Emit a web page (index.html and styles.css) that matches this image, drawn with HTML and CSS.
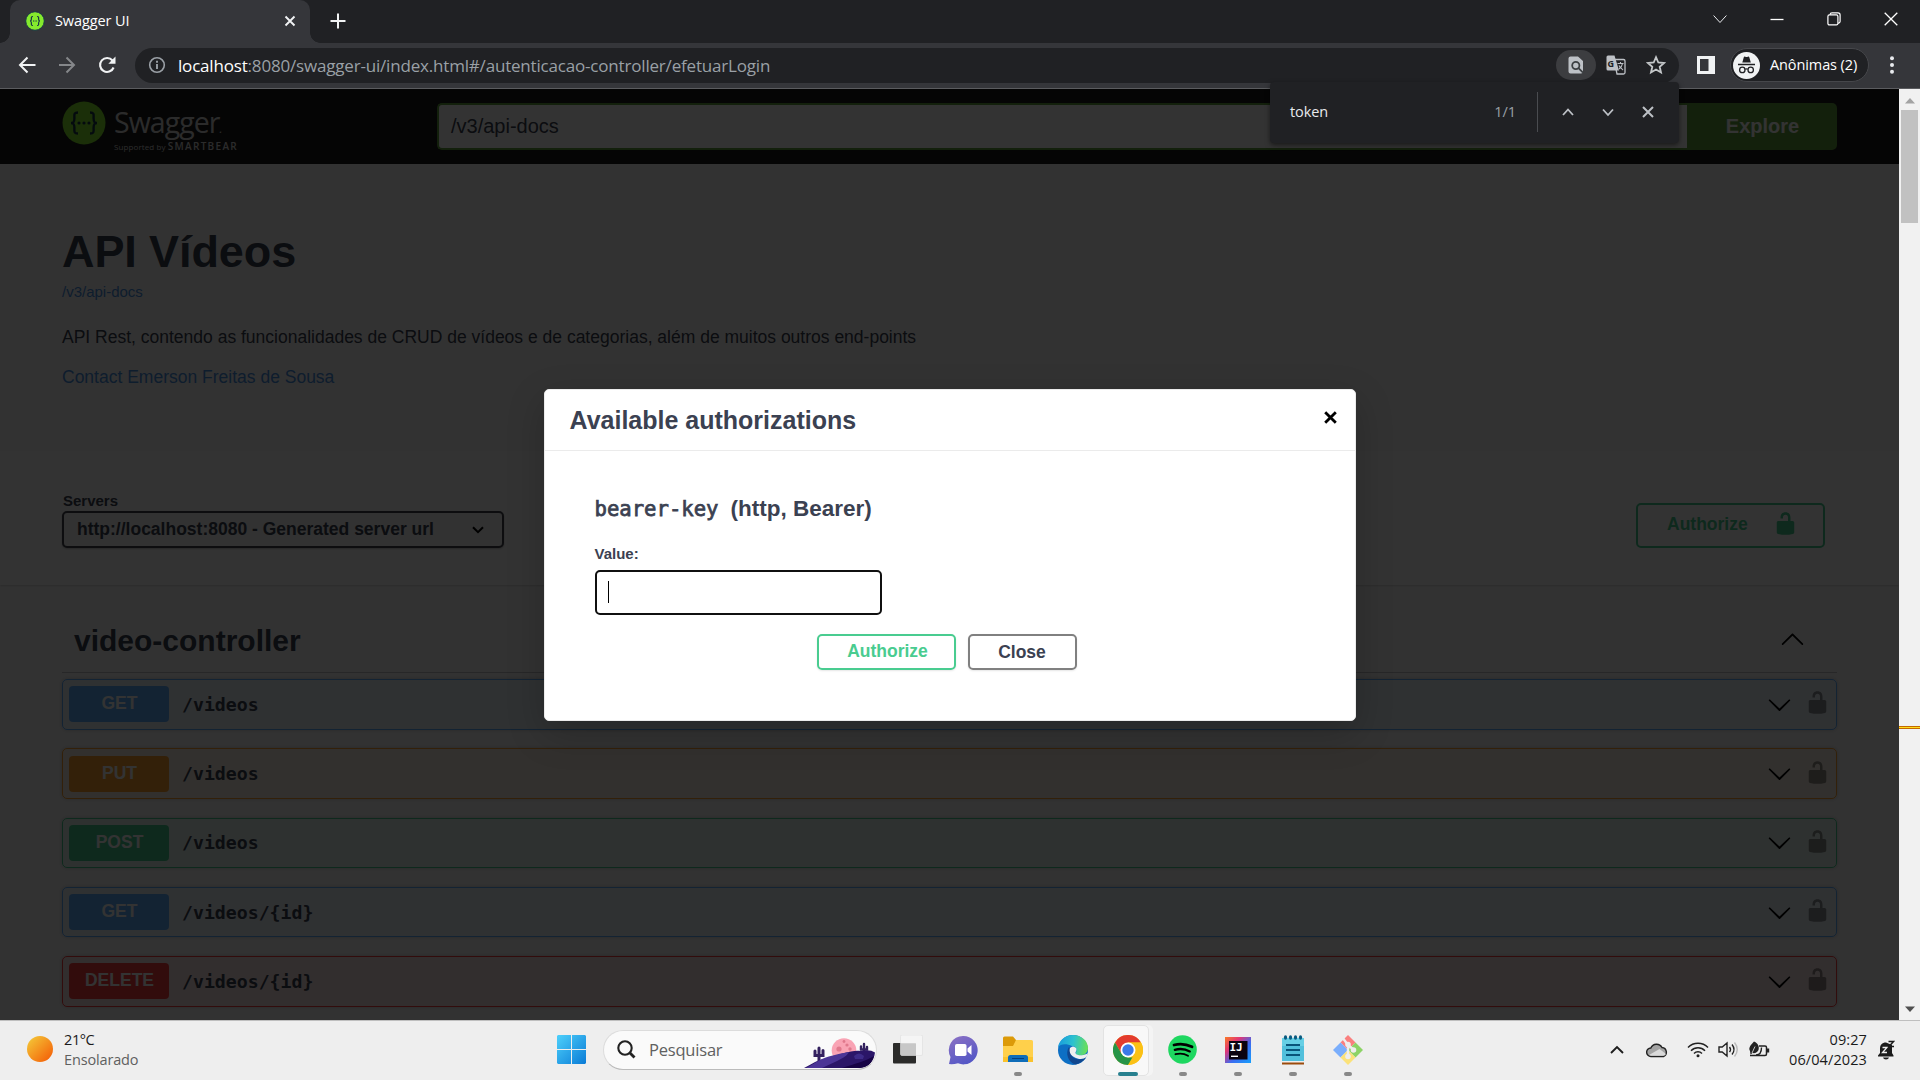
FILE: index.html
```html
<!DOCTYPE html>
<html lang="pt-BR">
<head>
<meta charset="utf-8">
<title>Swagger UI</title>
<link rel="stylesheet" href="styles.css">
</head>
<body>
<svg class="defs" width="0" height="0">
  <symbol id="lock" viewBox="0 0 20 20"><path d="M15.8 8H14V5.6C14 2.703 12.665 1 10 1 7.334 1 6 2.703 6 5.6V6h2v-.801C8 3.754 8.797 3 10 3c1.203 0 2 .754 2 2.199V8H4c-.553 0-1 .646-1 1.199V17c0 .549.428 1.139.951 1.307l1.197.387C5.672 18.861 6.55 19 7.1 19h5.8c.549 0 1.428-.139 1.951-.307l1.196-.387c.524-.167.953-.757.953-1.306V9.199C17 8.646 16.352 8 15.8 8z"/></symbol>
  <symbol id="down" viewBox="0 0 20 20"><path d="M17.418 6.109c.272-.268.709-.268.979 0s.271.701 0 .969l-7.908 7.83c-.27.268-.707.268-.979 0l-7.908-7.83c-.27-.268-.27-.701 0-.969.271-.268.709-.268.979 0L10 13.25l7.418-7.141z"/></symbol>
  <symbol id="up" viewBox="0 0 20 20"><path d="M17.418 14.908c.272.27.709.27.979 0s.271-.697 0-.969l-7.908-7.83c-.27-.268-.707-.268-.979 0l-7.908 7.83c-.27.27-.27.699 0 .969.271.27.709.27.979 0L10 7.767l7.418 7.141z"/></symbol>
</svg>

<header class="tabstrip">
  <div class="tab">
    <svg class="favicon" width="20" height="20" viewBox="0 0 20 20"><circle cx="10" cy="10" r="9.3" fill="#85ea2d" stroke="#173647" stroke-width="1"/><g fill="none" stroke="#173647" stroke-width="1.2"><path d="M8 5.5c-2 0-1.600 1-1.600 2.500S6 10 5 10c1 0 1.400.6 1.400 2s-.4 2.500 1.600 2.500M12 5.500c2 0 1.600 1 1.600 2.500S14 10 15 10c-1 0-1.400.6-1.400 2s.4 2.500-1.600 2.500"/><path d="M8 10h4" stroke-dasharray="1 .6"/></g></svg>
    <span class="tab-title">Swagger UI</span>
    <svg class="tab-close" width="12" height="12" viewBox="0 0 12 12" stroke="#f1f3f4" stroke-width="1.900"><path d="M1.500 1.500l9 9M10.500 1.500l-9 9"/></svg>
  </div>
  <svg class="new-tab" width="16" height="16" viewBox="0 0 16 16" stroke="#f1f3f4" stroke-width="2"><path d="M8 .5v15M.5 8h15"/></svg>
  <div class="window-buttons">
    <svg width="14" height="10" viewBox="0 0 14 10" fill="none" stroke="#e8eaed" stroke-width="1"><path d="M.6 1.500L7 8.500l6.400-7"/></svg>
    <svg width="14" height="14" viewBox="0 0 14 14" stroke="#fff" stroke-width="1.300"><path d="M.5 7.500h13"/></svg>
    <svg width="14" height="14" viewBox="0 0 14 14" fill="none" stroke="#fff" stroke-width="1.200"><rect x=".9" y="2.900" width="10" height="10" rx="1.500"/><path d="M3.200 2.700V2.200Q3.200.9 5 .9h6Q13.100.9 13.100 3v6.500q0 1.300-2 1.800"/></svg>
    <svg width="14" height="14" viewBox="0 0 14 14" stroke="#fff" stroke-width="1.300"><path d="M.7.7l12.600 12.600M13.300.7L.7 13.300"/></svg>
  </div>
</header>

<nav class="toolbar">
  <div class="nav-buttons">
    <svg width="18" height="18" viewBox="0 0 18 18" fill="none" stroke="#f1f3f4" stroke-width="2"><path d="M17.500 9H2.500M9.500 1.500L2 9l7.500 7.500"/></svg>
    <svg width="18" height="18" viewBox="0 0 18 18" fill="none" stroke="#85878a" stroke-width="2"><path d="M1 9h14.500M8.500 1.500L16 9l-7.500 7.500"/></svg>
    <svg width="18" height="18" viewBox="0 0 18 18" fill="none" stroke="#f1f3f4" stroke-width="2.100"><path d="M15.600 11.500A7 7 0 1 1 14.500 4.500"/><path d="M17.500.5v7.200h-7.200z" fill="#f1f3f4" stroke="none"/></svg>
  </div>
  <div class="omnibox">
    <svg width="18" height="18" viewBox="0 0 18 18" fill="none" stroke="#9aa0a6" stroke-width="1.600"><circle cx="9" cy="9" r="7.300"/><path d="M9 8v5M9 4.800v1.900" stroke-width="1.900"/></svg>
    <span class="url"><b>localhost</b>:8080/swagger-ui/index.html#/autenticacao-controller/efetuarLogin</span>
    <div class="omni-icons">
      <span class="find-chip"><svg width="16" height="20" viewBox="0 0 16 20"><path d="M2.500 1.500H10l5 4.500v10.500a2 2 0 0 1-2 2H2.500a2 2 0 0 1-2-2v-13a2 2 0 0 1 2-2z" fill="#bdc1c6"/><g fill="none" stroke="#3c4043" stroke-width="1.800"><circle cx="7.800" cy="10.500" r="3.600"/><path d="M10.500 13.200l4.500 4.500"/></g></svg></span>
      <svg width="20" height="20" viewBox="0 0 20 20"><path d="M8 4.500h9.500a1.500 1.500 0 0 1 1.500 1.500v11.500a1.500 1.500 0 0 1-1.500 1.500H11z" fill="none" stroke="#bdc1c6" stroke-width="1.300"/><path d="M2 .5h6.500L13 15.500H2A1.500 1.500 0 0 1 .5 14V2A1.500 1.500 0 0 1 2 .5z" fill="#bdc1c6"/><text x="1.500" y="11.500" class="g-letter">G</text><path d="M11.500 8.500h6M14.500 7v1.500M16.500 8.500c-.5 3-2 4.500-3.500 5.500M13 10.500c1 2 2.500 3 4 4.500" fill="none" stroke="#bdc1c6" stroke-width="1.100"/></svg>
      <svg width="20" height="20" viewBox="0 0 20 20" fill="none" stroke="#c4c7c9" stroke-width="1.800"><path d="M10 2.200l2.300 5.300 5.800.5-4.400 3.800 1.300 5.700-5-3-5 3 1.300-5.700L1.900 8l5.800-.5z"/></svg>
    </div>
  </div>
  <svg class="side-panel" width="18" height="18" viewBox="0 0 18 18"><path d="M0 0h18v18H0zM3 3v12h8.500V3z" fill="#f1f3f4" fill-rule="evenodd"/></svg>
  <div class="profile">
    <svg width="27" height="27" viewBox="0 0 27 27"><circle cx="13.500" cy="13.500" r="13.500" fill="#f1f3f4"/><path d="M9.300 10.500l1.500-5.200c.3-.8.9-.9 1.500-.6 1 .4 1.600.4 2.500 0 .6-.3 1.200-.2 1.500.6l1.500 5.200z" fill="#202124"/><path d="M5 12.500h17" stroke="#202124" stroke-width="1.500"/><g fill="none" stroke="#202124" stroke-width="1.300"><circle cx="9.300" cy="17.900" r="2.700"/><circle cx="17.700" cy="17.900" r="2.700"/><path d="M12.200 17.300q1.300-.8 2.600 0"/></g></svg>
    <span>Anônimas (2)</span>
  </div>
  <svg class="menu-dots" width="4" height="18" viewBox="0 0 4 18" fill="#e8eaed"><circle cx="2" cy="2.300" r="2"/><circle cx="2" cy="9" r="2"/><circle cx="2" cy="15.700" r="2"/></svg>
</nav>

<div class="find-bar">
  <span class="find-text">token</span>
  <span class="find-count">1/1</span>
  <span class="find-sep"></span>
  <svg width="12" height="12" viewBox="0 0 12 12" fill="none" stroke="#bdc1c6" stroke-width="1.800"><path d="M1 9l5-5.500L11 9"/></svg>
  <svg width="12" height="12" viewBox="0 0 12 12" fill="none" stroke="#bdc1c6" stroke-width="1.800"><path d="M1 3.500L6 9l5-5.500"/></svg>
  <svg width="12" height="12" viewBox="0 0 12 12" fill="none" stroke="#bdc1c6" stroke-width="2"><path d="M1 1l10 10M11 1L1 11"/></svg>
</div>

<div class="viewport">
  <main class="page">
    <div class="topbar">
      <div class="logo">
        <svg width="44" height="44" viewBox="0 0 44 44"><circle cx="22" cy="22" r="21.500" fill="#85ea2d"/><g fill="none" stroke="#173647" stroke-width="2.400"><path d="M16 11.500c-4.500 0-3.600 2.200-3.600 5.500S12 22 9 22c3 0 3.400 1.700 3.400 5s-.9 5.500 3.600 5.500M28 11.500c4.500 0 3.600 2.200 3.600 5.500S32 22 35 22c-3 0-3.400 1.700-3.400 5s.9 5.500-3.600 5.500"/></g><g fill="#173647"><circle cx="17" cy="22" r="1.600"/><circle cx="22" cy="22" r="1.600"/><circle cx="27" cy="22" r="1.600"/></g></svg>
        <div class="logo-words">
          <span class="logo-name">Swagger<i>.</i></span>
          <span class="logo-sub">Supported by <b>SMARTBEAR</b></span>
        </div>
      </div>
      <div class="spec-form"><div class="spec-input">/v3/api-docs</div><div class="explore">Explore</div></div>
    </div>

    <section class="info">
      <h1>API Vídeos</h1>
      <a class="spec-link">/v3/api-docs</a>
      <p>API Rest, contendo as funcionalidades de CRUD de vídeos e de categorias, além de muitos outros end-points</p>
      <a class="contact">Contact Emerson Freitas de Sousa</a>
    </section>

    <section class="scheme">
      <div>
        <div class="servers-label">Servers</div>
        <div class="server-select"><span>http://localhost:8080 - Generated server url</span>
          <svg width="12" height="8" viewBox="0 0 12 8" fill="none" stroke="#000" stroke-width="2"><path d="M1 1.200l5 5 5-5"/></svg></div>
      </div>
      <div class="authorize"><span>Authorize</span><svg width="25" height="25"><use href="#lock"/></svg></div>
    </section>

    <section class="operations">
      <div class="tag"><h2>video-controller</h2><svg width="25" height="25"><use href="#up"/></svg></div>
      <div class="op get"><span class="method">GET</span><span class="path">/videos</span><svg width="25" height="25"><use href="#down"/></svg><svg class="op-lock" width="25" height="25"><use href="#lock"/></svg></div>
      <div class="op put"><span class="method">PUT</span><span class="path">/videos</span><svg width="25" height="25"><use href="#down"/></svg><svg class="op-lock" width="25" height="25"><use href="#lock"/></svg></div>
      <div class="op post"><span class="method">POST</span><span class="path">/videos</span><svg width="25" height="25"><use href="#down"/></svg><svg class="op-lock" width="25" height="25"><use href="#lock"/></svg></div>
      <div class="op get"><span class="method">GET</span><span class="path">/videos/{id}</span><svg width="25" height="25"><use href="#down"/></svg><svg class="op-lock" width="25" height="25"><use href="#lock"/></svg></div>
      <div class="op delete"><span class="method">DELETE</span><span class="path">/videos/{id}</span><svg width="25" height="25"><use href="#down"/></svg><svg class="op-lock" width="25" height="25"><use href="#lock"/></svg></div>
    </section>

    <div class="backdrop">
      <div class="modal">
        <div class="modal-header"><h3>Available authorizations</h3>
          <svg width="13" height="13" viewBox="0 0 13 13" stroke="#000" stroke-width="2.800"><path d="M1.200 1.200l10.600 10.600M11.800 1.200L1.200 11.800"/></svg></div>
        <div class="modal-body">
          <h4><code>bearer-key</code><span>(http, Bearer)</span></h4>
          <label>Value:</label>
          <div class="token-input"><span class="caret"></span></div>
          <div class="modal-buttons"><span class="btn ok">Authorize</span><span class="btn">Close</span></div>
        </div>
      </div>
    </div>
  </main>
  <aside class="scrollbar">
    <svg width="12" height="7" viewBox="0 0 12 7" fill="#a3a3a3"><path d="M1 6.500L6 1l5 5.500z"/></svg>
    <div class="track"><div class="thumb"></div><div class="match"></div></div>
    <svg width="12" height="7" viewBox="0 0 12 7" fill="#505050"><path d="M1 .5L6 6l5-5.500z"/></svg>
  </aside>
</div>

<footer class="taskbar">
  <div class="weather">
    <span class="sun"></span>
    <div><div class="temp">21°C</div><div class="cond">Ensolarado</div></div>
  </div>
  <div class="apps">
    <svg class="start" width="29" height="29" viewBox="0 0 29 29"><defs><linearGradient id="win" x1="0" y1="0" x2="1" y2="1" gradientUnits="objectBoundingBox"><stop offset="0" stop-color="#4dd0fb"/><stop offset="1" stop-color="#0a7bd6"/></linearGradient></defs><path fill="url(#win)" d="M1 0h13v14H0V1zM15 0h13l1 1v13H15zM0 15h14v14H1l-1-1zM15 15h14v13l-1 1H15z"/></svg>
    <div class="search">
      <svg width="19" height="19" viewBox="0 0 19 19" fill="none" stroke="#222" stroke-width="2.100"><circle cx="8" cy="8" r="6.700"/><path d="M12.500 12.500l5 5" stroke-width="2.800"/></svg>
      <span>Pesquisar</span>
      <svg class="scene" width="72" height="32" viewBox="0 0 72 32"><circle cx="40" cy="13.500" r="12.300" fill="#f9a3b4"/><g fill="#e0788c"><circle cx="35" cy="12" r="2.600"/><circle cx="43" cy="8" r="1.600"/><circle cx="40" cy="4.500" r="1.400"/><circle cx="46" cy="12" r="1.700"/></g><g fill="none" stroke="#33215f" stroke-width="3" stroke-linecap="round"><path d="M15 24V11M11 14v4.500h8v-5"/><path d="M60 16V7M57 9.500v3h6V10" stroke-width="2.400"/></g><path d="M0 31C8 27 14 22 23 22 36 17 48 13 56 14q10-2 15 1.500C70 24 65 29 56 31z" fill="#2b1668"/><path d="M14 24c9-5 20-7 31-9-2 5-12 9-27 16H2c5-2 8-5 12-7z" fill="#4b3596"/><path d="M50 19q5-5 10 0l-1 3h-8z" fill="#3d2b88"/><path d="M38 31c12-4 24-7 32-12-2 8-7 12-15 12z" fill="#170345"/></svg>
    </div>
    <svg class="icon taskview" width="30" height="30" viewBox="0 0 30 30"><rect x="0" y="8" width="23" height="20.500" rx="1" fill="#2b2b2a"/><rect x="7.500" y="0" width="22" height="20.500" rx="1.500" fill="#f6f6f6" fill-opacity=".88" stroke="#ddd" stroke-width=".6"/><path d="M8 8.500h15V20H8z" fill="#bbb" fill-opacity=".65"/></svg>
    <svg class="icon" width="30" height="30" viewBox="0 0 30 30"><defs><linearGradient id="chat" x1="0" y1="0" x2=".5" y2="1"><stop offset="0" stop-color="#8d72c4"/><stop offset="1" stop-color="#5658c6"/></linearGradient></defs><path d="M15 1a14.200 14.200 0 1 1-5 27.300Q5 29.500 1 29L2.500 22A14.200 14.200 0 0 1 15 1z" fill="url(#chat)"/><rect x="7" y="9" width="11.500" height="12" rx="1.800" fill="#fff"/><path d="M19.500 13.500l4-3.500v10l-4-3.500z" fill="#fff"/></svg>
    <span class="app run"><svg width="30" height="28" viewBox="0 0 30 28"><path d="M0 2Q0 .5 1.500.5H10l3 3.500h7v6H0z" fill="#dc9a08"/><path d="M0 10h10l3-6h15.500Q30 4 30 5.500V26H0z" fill="#ffd04b"/><path d="M0 21h30v5H0z" fill="#fac22c"/><path d="M5 21.500q0-2.500 2.500-2.500h15q2.500 0 2.500 2.500V26H5z" fill="#0f6db9"/><path d="M9 22.500h12" stroke="#063f7e"/></svg></span>
    <svg class="icon" width="30" height="30" viewBox="0 0 30 30"><defs><linearGradient id="edge" x1="0" y1=".4" x2="1" y2=".5"><stop offset="0" stop-color="#199cdd"/><stop offset=".5" stop-color="#2dc2cf"/><stop offset="1" stop-color="#6be054"/></linearGradient></defs><circle cx="15" cy="15" r="15" fill="#0d6fc4"/><path d="M0 12.500C1 5 7.500 0 15 0c8 0 15 5.500 15 13 0 5-4 7.500-8 7.500-3 0-5-1-4-3 1.500-3-.5-6.500-4-6.500C8 8 2 9 0 12.500z" fill="url(#edge)"/><path d="M11 12c-4 6-1 15 6 17.500 4-.5 8.500-3 11-7-7 4-16 1-15-6z" fill="#11478f"/><path d="M12 13q3-3 6 0c1 2 0 3-.5 4.500-.5 2.500 5 4 11 1.500l1.500-1-1.500 4q-4 3-9 1.500c-6-1.500-9-6-7.500-10.500z" fill="#efeff0"/></svg>
    <span class="app run active"><svg width="30" height="30" viewBox="0 0 30 30"><circle cx="15" cy="15" r="15" fill="#fbc116"/><path d="M2 7.500A15 15 0 0 1 28 7.500H15L8.500 18.750z" fill="#e33b2e"/><path d="M2 7.500L8.500 18.750 15 22.500h6.500L15 30A15 15 0 0 1 2 7.500z" fill="#269447"/><path d="M21.500 18.750L15 30a15 15 0 0 0 13-22.500H15z" fill="#fbc116"/><circle cx="15" cy="15" r="7.500" fill="#fff"/><circle cx="15" cy="15" r="5.700" fill="#3c79e8"/></svg></span>
    <span class="app run"><svg width="29" height="29" viewBox="0 0 29 29"><circle cx="14.500" cy="14.500" r="14.300" fill="#1ed760"/><g fill="none" stroke="#000" stroke-linecap="round"><path d="M6 10q9-2.500 18 1.800" stroke-width="2.800"/><path d="M6.800 14.800q8-2.200 15 1.600" stroke-width="2.300"/><path d="M7.500 19.200q7-1.700 12.500 1.500" stroke-width="1.900"/></g></svg></span>
    <span class="app run"><svg width="26" height="26" viewBox="0 0 26 26"><defs><linearGradient id="ij" x1="0" y1="0" x2="1" y2="1"><stop offset="0" stop-color="#fb7b25"/><stop offset=".3" stop-color="#e03576"/><stop offset=".6" stop-color="#3c6cf0"/><stop offset="1" stop-color="#159ffc"/></linearGradient></defs><path d="M0 0h26v26H0z" fill="url(#ij)"/><path d="M4 4h18.500v18.500H4z" fill="#0b0310"/><text x="4.500" y="13.500" class="ij-text">IJ</text><path d="M6 19.300h7" stroke="#fff" stroke-width="1.400"/></svg></span>
    <span class="app run"><svg width="24" height="30" viewBox="0 0 24 30"><path d="M1 3h22v24H1z" fill="#52c0dc"/><path d="M1 3h22v8H1z" fill="#67cfe5"/><path d="M1 27h22v2.500H1z" fill="#9b4b0c"/><path d="M1 26h22v1.500H1z" fill="#eee"/><g stroke="#09547a" stroke-width="2"><path d="M5 10h14M5 15h14M5 20h14"/></g><g fill="#0a5b80"><ellipse cx="4.500" cy="2.500" rx="1.600" ry="2.200"/><ellipse cx="9.500" cy="2.500" rx="1.600" ry="2.200"/><ellipse cx="14.500" cy="2.500" rx="1.600" ry="2.200"/><ellipse cx="19.500" cy="2.500" rx="1.600" ry="2.200"/></g></svg></span>
    <span class="app run"><svg width="30" height="30" viewBox="0 0 30 30"><path d="M15 0l7.500 7.500L15 15 7.500 7.500z" fill="#fa7f7e"/><path d="M22.500 7.500L30 15l-7.500 7.500L15 15z" fill="#8cd366"/><path d="M7.500 7.500L15 15l-7.500 7.500L0 15z" fill="#7aaefc"/><path d="M15 15l7.500 7.500L15 30l-7.500-7.500z" fill="#fbe27a"/><g stroke="#eee" stroke-width="2.400" fill="#eee"><path d="M9 2l6 8v13M15 10l6 5" fill="none"/><circle cx="15" cy="9.500" r="1.600"/><circle cx="20.500" cy="15" r="1.600"/><circle cx="15" cy="21.500" r="1.600"/></g></svg></span>
  </div>
  <div class="tray">
    <svg width="14" height="9" viewBox="0 0 14 9" fill="none" stroke="#1d1d1d" stroke-width="1.900"><path d="M1 8l6-6 6 6"/></svg>
    <svg class="t-cloud" width="22" height="16" viewBox="0 0 22 16"><path d="M5 14.500A4.200 4.200 0 0 1 4.800 6 6.200 6.200 0 0 1 16 5.500a4.700 4.700 0 0 1 1.500 9z" fill="#a4a4a4" stroke="#222" stroke-width="1.400"/><path d="M3 13l10.500-6 6.500 5q-1 2-3 1.800H5z" fill="#dadada"/></svg>
    <svg class="t-wifi" width="22" height="17" viewBox="0 0 22 17" fill="none" stroke="#222" stroke-width="1.500"><path d="M1 6.500a14 14 0 0 1 20 0M4 9.700a9.900 9.900 0 0 1 14 0M7 12.500a5.700 5.700 0 0 1 8 0"/><circle cx="11" cy="14.700" r="1.500" fill="#222" stroke="none"/></svg>
    <svg class="t-vol" width="21" height="17" viewBox="0 0 21 17" fill="none" stroke="#222" stroke-width="1.400"><path d="M1 6h3.200L9 2v13l-4.800-4H1zM11.500 6q2 2.500 0 5M14 3.500q4 5 0 10"/><path d="M16.500 1.500q5.500 7 0 14" stroke="#bbb"/></svg>
    <svg class="t-bat" width="22" height="18" viewBox="0 0 22 18"><path d="M11 5h6q1.500 0 1.500 1.500V13q0 1.500-1.500 1.500H2" fill="none" stroke="#222" stroke-width="1.500"/><path d="M19 7.500h2.200v4H19z" fill="#222"/><path d="M6 .5c4.500 2 5.500 5.500 4.500 8.500-1 2.500-3.500 3.500-6 3L2.500 13.500 2 10C0 6.500 3 4 6 .5z" fill="#222"/><path d="M7 5.500L4 12" stroke="#eee" stroke-width=".8"/><path d="M8 14c3.500 0 5.500-3 5.500-7.500" fill="none" stroke="#222" stroke-width="1.400"/></svg>
    <div class="clock"><div>09:27</div><div>06/04/2023</div></div>
    <svg class="t-bell" width="18" height="20" viewBox="0 0 18 20"><path d="M9 2.500c-4 0-6 2.500-6 6V13l-2 2.500v1h15.500v-1L15 13V5z" fill="#1b1b1b"/><path d="M6 17.500h6q-.5 2-3 2t-3-2z" fill="#1b1b1b"/><g fill="none" stroke="#eee" stroke-width="1.300"><path d="M5.500 7.500h4.500l-4.500 5H10"/></g><path d="M11.500 1.500h5L12 6.500h5" fill="none" stroke="#1b1b1b" stroke-width="1.500"/></svg>
  </div>
</footer>
</body>
</html>
```
FILE: styles.css
```css
* { box-sizing: border-box; }
body { margin: 0; width: 1920px; height: 1080px; overflow: hidden; position: relative; display: flex; flex-direction: column; font-family: "Open Sans", "Noto Sans", sans-serif; }
svg { display: block; flex: none; }
.defs { position: absolute; }
h1, h2, h3, h4, p { margin: 0; }

/* Browser chrome */
.tabstrip { height: 43px; background: #202124; display: flex; padding-left: 10px; }
.tab { position: relative; width: 300px; height: 43px; background: #35363a; border-radius: 10px 10px 0 0; display: flex; align-items: center; padding: 0 14px 2px 15px; }
.tab::before, .tab::after { content: ""; position: absolute; bottom: 0; width: 10px; height: 10px; }
.tab::before { left: -10px; background: radial-gradient(circle at 0 0, transparent 9.5px, #35363a 10px); }
.tab::after { right: -10px; background: radial-gradient(circle at 100% 0, transparent 9.5px, #35363a 10px); }
.tab-title { color: #fff; font-size: 14.5px; margin-left: 10px; letter-spacing: -.1px; flex: 1; line-height: 20px; }
.new-tab { margin: 13px 0 0 20px; }
.window-buttons { margin-left: auto; display: flex; gap: 43px; height: 38px; align-items: center; padding-right: 22px; }
.toolbar { height: 46px; background: #35363a; border-bottom: 1px solid #5b5c5f; display: flex; align-items: center; padding-bottom: 1px; }
.nav-buttons { display: flex; gap: 22px; padding-left: 18px; width: 135px; }
.omnibox { width: 1544px; height: 35px; border-radius: 18px; background: #202124; display: flex; align-items: center; padding: 0 13px; }
.url { margin-left: 12px; font-size: 17px; color: #9aa0a6; letter-spacing: -.185px; }
.url b { font-weight: 400; color: #fff; }
.omni-icons { margin-left: auto; display: flex; align-items: center; gap: 20px; }
.find-chip { width: 40px; height: 30px; border-radius: 15px; background: #3c3d40; display: flex; align-items: center; justify-content: center; margin-right: -10px; }
.g-letter { font: bold 9px "Open Sans", sans-serif; fill: #202124; }
.side-panel { margin-left: 18px; }
.profile { margin-left: 15px; width: 139px; height: 34px; border: 1px solid #46474b; border-radius: 17px; background: #202124; display: flex; align-items: center; padding-left: 2px; color: #fff; font-size: 14.5px; }
.profile span { margin: -2px 0 0 10px; letter-spacing: -.1px; white-space: nowrap; }
.menu-dots { margin-left: 21px; }
.find-bar { position: absolute; z-index: 5; left: 1270px; top: 82px; width: 409px; height: 61px; background: #202124; border-radius: 4px; box-shadow: 0 2px 5px rgba(0,0,0,.5); display: flex; align-items: center; padding: 0 25px 2px 20px; font-size: 14.5px; }
.find-text { color: #e8eaed; width: 205px; letter-spacing: -.1px; }
.find-count { color: #9aa0a6; width: 43px; }
.find-sep { width: 1px; height: 40px; background: #4a4c50; }
.find-bar svg { margin-left: 28px; }
.find-sep + svg { margin-left: 24px; }

/* Document */
.viewport { height: 931px; display: flex; }
.page { width: 1899px; position: relative; background: #fafafa; font-family: "Liberation Sans", Arial, sans-serif; color: #3b4151; overflow: hidden; }
.topbar { height: 75px; background: #1b1b1b; display: flex; padding: 0 62px; }
.logo { display: flex; width: 375px; color: #fff; padding-top: 12px; }
.logo-words { margin-left: 8px; font-family: "Open Sans", sans-serif; color: #d8d8d8; }
.logo-name { display: block; font-size: 28.5px; line-height: 38px; letter-spacing: -.95px; margin-top: 2px; }
.logo-name i { font-size: 12px; }
.logo-sub { display: block; font-size: 8px; line-height: 10px; white-space: nowrap; margin-top: -7px; letter-spacing: .1px; }
.logo-sub b { font-size: 10px; letter-spacing: 1.3px; font-weight: 600; }
.spec-form { flex: 1; display: flex; height: 47px; margin-top: 14px; }
.spec-input { flex: 1; border: 2px solid #62a03f; border-right: 0; border-radius: 5px 0 0 5px; background: #fff; font-size: 20px; line-height: 43px; padding-left: 12px; }
.explore { width: 150px; background: #62a03f; border-radius: 0 5px 5px 0; color: #fff; font-weight: 700; font-size: 20px; line-height: 47px; text-align: center; padding-left: 1px; }
.info { height: 287px; padding: 62px 62px 0; font-size: 17.5px; }
.info h1 { font-size: 45px; line-height: 52px; letter-spacing: -.1px; }
.info a { display: block; color: #4990e2; line-height: 20px; }
.info .spec-link { font-size: 15px; margin-top: 4px; }
.info p { line-height: 20px; margin-top: 25px; }
.info .contact { margin-top: 20px; }
.scheme { height: 134px; background: #fff; box-shadow: 0 1px 2px rgba(0,0,0,.15); padding: 41px 74px 0 62px; display: flex; justify-content: space-between; font-weight: 700; }
.servers-label { font-size: 15px; line-height: 17px; padding: 0 1px; }
.server-select { width: 442px; height: 37px; margin-top: 2px; border: 2.5px solid #41444e; border-radius: 5px; background: #f7f7f7; box-shadow: 0 1px 2px rgba(0,0,0,.25); font-size: 17.5px; display: flex; align-items: center; justify-content: space-between; padding: 0 18px 0 13px; }
.authorize { width: 189px; height: 45px; margin-top: 11px; border: 2.5px solid #49cc90; border-radius: 5px; color: #49cc90; fill: #49cc90; font-size: 17.5px; display: flex; justify-content: space-between; padding: 7px 25px 0 29px; line-height: 24px; }
.authorize svg { margin-top: -1px; }
.operations { padding: 0 62px; }
.tag { height: 88px; border-bottom: 1px solid rgba(59,65,81,.3); margin-bottom: 6px; display: flex; justify-content: space-between; padding: 39px 32px 0 12px; }
.tag h2 { font-size: 30px; line-height: 34px; }
.tag svg { margin-top: 2px; fill: #000; }
.op { height: 50.5px; margin-bottom: 18.75px; border: 1.25px solid; border-radius: 5px; box-shadow: 0 0 4px rgba(0,0,0,.19); display: flex; align-items: center; padding: 0 6px; }
.method { width: 100px; height: 36px; border-radius: 4px; color: #fff; font-weight: 700; font-size: 17.5px; line-height: 35px; text-align: center; padding-left: 1px; }
.path { flex: 1; margin-left: 13px; font: 700 18.2px "DejaVu Sans Mono", monospace; }
.op svg { fill: #000; }
.op .op-lock { margin: -3px 0 0 13px; fill: #000; opacity: .4; }
.get { border-color: #61affe; background: rgba(97,175,254,.1); }
.get .method { background: #61affe; }
.put { border-color: #fca130; background: rgba(252,161,48,.1); }
.put .method { background: #fca130; }
.post { border-color: #49cc90; background: rgba(73,204,144,.1); }
.post .method { background: #49cc90; }
.delete { border-color: #f93e3e; background: rgba(249,62,62,.1); }
.delete .method { background: #f93e3e; }

/* Authorization dialog */
.backdrop { position: absolute; inset: 0; background: rgba(0,0,0,.8); display: flex; justify-content: center; align-items: center; }
.modal { width: 812px; height: 332px; background: #fff; border: 1px solid #ebebeb; border-radius: 5px; box-shadow: 0 12px 38px rgba(0,0,0,.2); }
.modal-header { height: 61px; border-bottom: 1px solid #ebebeb; display: flex; justify-content: space-between; align-items: center; padding: 0 18px 0 25px; }
.modal-header h3 { font-size: 25px; font-weight: 700; line-height: 30px; }
.modal-header svg { margin-top: -5px; }
.modal-body { padding: 43px 50px 0; }
h4 { display: flex; align-items: baseline; font-size: 22.5px; line-height: 30px; }
h4 code { font: 400 20.6px "DejaVu Sans Mono", monospace; -webkit-text-stroke: .75px #3b4151; margin-right: 12px; }
label { display: block; font-size: 15px; font-weight: 700; line-height: 18px; margin-top: 21px; }
.token-input { width: 287px; height: 45px; border: 2px solid #101010; border-radius: 5px; margin-top: 7px; padding: 9px 11px; }
.caret { display: block; width: 1px; height: 22px; background: #000; }
.modal-buttons { display: flex; justify-content: center; gap: 12px; margin: 19px 6px 0 0; }
.btn { height: 36px; border: 2px solid gray; border-radius: 5px; box-shadow: 0 1px 2px rgba(0,0,0,.1); width: 109px; text-align: center; font-weight: 700; font-size: 17.5px; line-height: 32px; }
.btn.ok { width: 139px; border-color: #49cc90; color: #49cc90; line-height: 30px; padding-left: 3px; }

.scrollbar { width: 21px; background: #f1f1f1; display: flex; flex-direction: column; align-items: center; padding: 8px 0 7px; }
.track { width: 21px; flex: 1; margin: 6px 0; position: relative; }
.thumb { width: 17px; height: 113px; margin-left: 2px; background: #c1c1c1; }
.match { position: absolute; top: 616px; left: 0; width: 21px; height: 3px; background: #ffde1c; border: solid #c46800; border-width: 1px 0; }

/* Taskbar */
.taskbar { height: 60px; background: #eee; border-top: 1px solid #bfbfbf; display: flex; color: #1b1b1b; }
.weather { display: flex; width: 557px; padding: 9px 0 0 27px; font-size: 14.5px; }
.sun { width: 26px; height: 26px; border-radius: 50%; margin: 6px 11px 0 0; background: linear-gradient(135deg, #f4c235 10%, #f4690c 85%); }
.temp, .cond { line-height: 20px; letter-spacing: -.4px; }
.cond { color: #5f5f5f; letter-spacing: -.15px; }
.apps { display: flex; padding-bottom: 2px; align-items: center; }
.start { margin-right: 17px; }
.search { width: 274px; height: 40px; border-radius: 20px; background: #fafafa; border: 1px solid #dcdcdc; border-bottom-color: #bbb; display: flex; align-items: center; padding-left: 13px; overflow: hidden; margin-right: 3px; }
.search span { margin-left: 13px; color: #606060; font-size: 16.5px; letter-spacing: -.2px; }
.scene { margin: 7px 0 0 auto; }
.icon { margin: 0 12.5px; }
.app { width: 55px; height: 50px; display: flex; align-items: center; justify-content: center; position: relative; }
.run::after { content: ""; position: absolute; left: 23.5px; bottom: -1px; width: 8px; height: 4px; border-radius: 2px; background: #888; }
.active::before { content: ""; position: absolute; z-index: 0; left: 3px; top: 0; width: 44px; height: 49px; background: #f8f8f8; border: 1px solid #e3e3e3; border-radius: 5px; box-shadow: 4px 0 0 #f4f4f4; }
.active svg { position: relative; }
.active::after { left: 17.5px; width: 20px; background: #28808f; }
.tray { margin-left: auto; display: flex; align-items: center; padding: 0 25px 2px 0; }
.t-cloud { margin-left: 22px; }
.t-wifi { margin-left: 19px; }
.t-vol { margin-left: 9px; }
.t-bat { margin-left: 9px; }
.clock { width: 97px; text-align: right; font-size: 14.5px; line-height: 20px; letter-spacing: .1px; }
.t-bell { margin-left: 10px; }
.ij-text { font: bold 11px "DejaVu Sans Mono", monospace; fill: #fff; }
```
